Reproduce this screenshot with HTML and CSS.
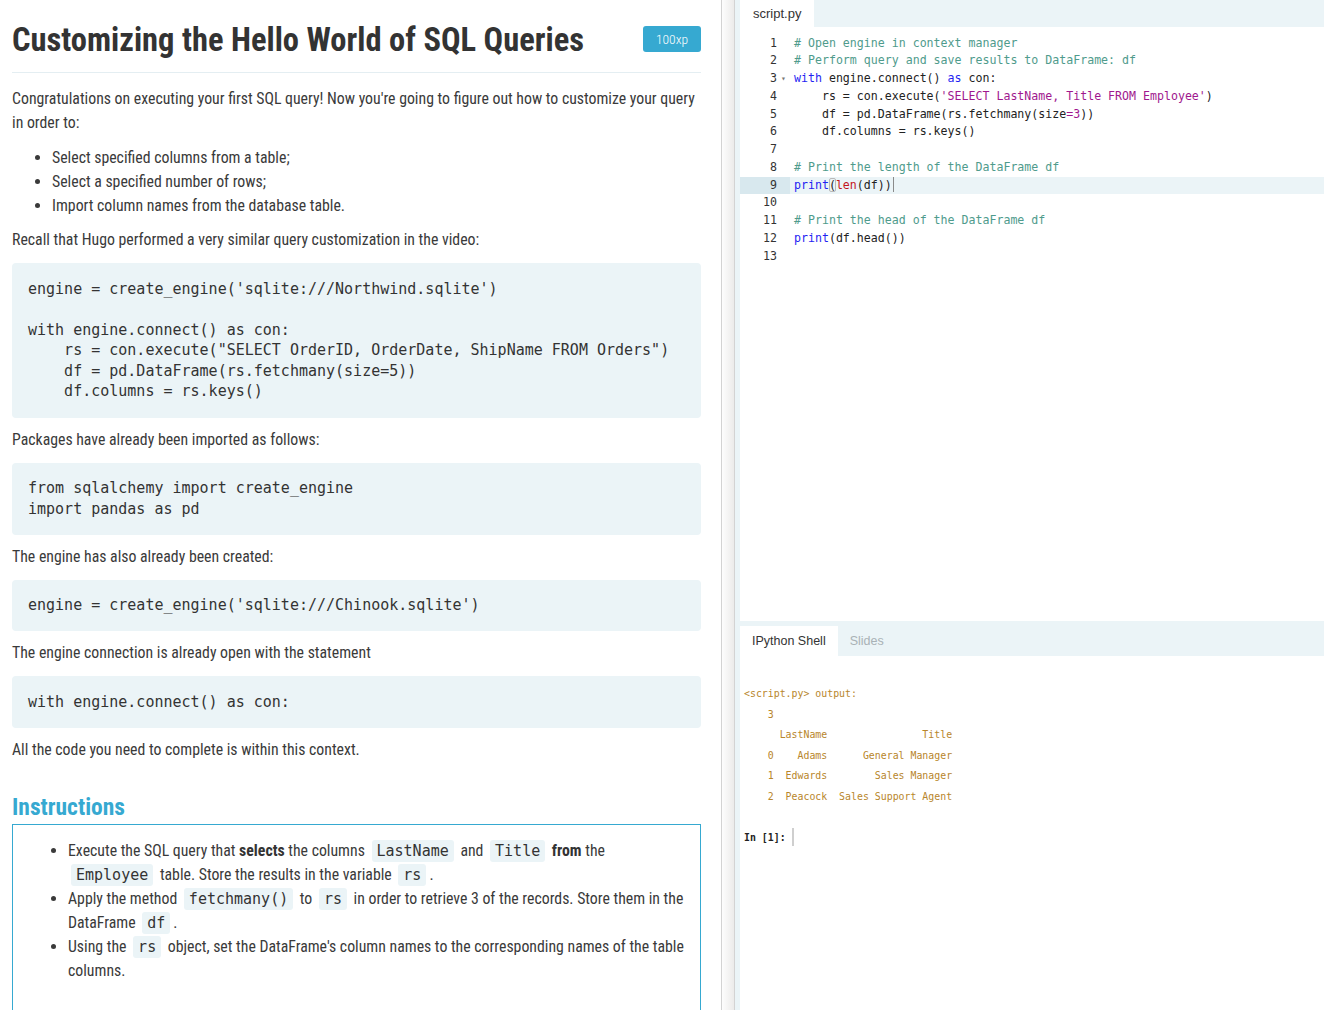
FILE: index.html
```html
<!DOCTYPE html>
<html lang="en">
<head>
<meta charset="utf-8">
<title>Customizing the Hello World of SQL Queries</title>
<link rel="stylesheet" href="styles.css">
</head>
<body>
<div class="app">
  <section class="lesson">
    <header class="lesson-head">
      <h1>Customizing the Hello World of SQL Queries</h1>
      <span class="xp">100xp</span>
    </header>
    <p>Congratulations on executing your first SQL query! Now you're going to figure out how to customize your query in order to:</p>
    <ul class="list">
      <li>Select specified columns from a table;</li>
      <li>Select a specified number of rows;</li>
      <li>Import column names from the database table.</li>
    </ul>
    <p>Recall that Hugo performed a very similar query customization in the video:</p>
    <pre class="code">engine = create_engine('sqlite:///Northwind.sqlite')

with engine.connect() as con:
    rs = con.execute("SELECT OrderID, OrderDate, ShipName FROM Orders")
    df = pd.DataFrame(rs.fetchmany(size=5))
    df.columns = rs.keys()</pre>
    <p>Packages have already been imported as follows:</p>
    <pre class="code">from sqlalchemy import create_engine
import pandas as pd</pre>
    <p>The engine has also already been created:</p>
    <pre class="code">engine = create_engine('sqlite:///Chinook.sqlite')</pre>
    <p>The engine connection is already open with the statement</p>
    <pre class="code">with engine.connect() as con:</pre>
    <p>All the code you need to complete is within this context.</p>
    <h2 class="instr-title">Instructions</h2>
    <div class="instr-box">
      <ul class="instr-list">
        <li>Execute the SQL query that <strong>selects</strong> the columns <code class="ic">LastName</code> and <code class="ic">Title</code> <strong>from</strong> the <code class="ic">Employee</code> table. Store the results in the variable <code class="ic">rs</code>.</li>
        <li>Apply the method <code class="ic">fetchmany()</code> to <code class="ic">rs</code> in order to retrieve 3 of the records. Store them in the DataFrame <code class="ic">df</code>.</li>
        <li>Using the <code class="ic">rs</code> object, set the DataFrame's column names to the corresponding names of the table columns.</li>
      </ul>
    </div>
  </section>

  <div class="splitter"></div>

  <section class="workspace">
    <div class="editor-pane">
      <div class="tabbar">
        <span class="tab active">script.py</span>
      </div>
      <div class="editor">
        <div class="line"><span class="gutter"><span class="ln">1</span><span class="fold"></span></span><span class="src"><span class="c"># Open engine in context manager</span></span></div>
        <div class="line"><span class="gutter"><span class="ln">2</span><span class="fold"></span></span><span class="src"><span class="c"># Perform query and save results to DataFrame: df</span></span></div>
        <div class="line"><span class="gutter"><span class="ln">3</span><span class="fold">&#9662;</span></span><span class="src"><span class="k">with</span> engine.connect() <span class="k">as</span> con:</span></div>
        <div class="line"><span class="gutter"><span class="ln">4</span><span class="fold"></span></span><span class="src">    rs = con.execute(<span class="s">'SELECT LastName, Title FROM Employee'</span>)</span></div>
        <div class="line"><span class="gutter"><span class="ln">5</span><span class="fold"></span></span><span class="src">    df = pd.DataFrame(rs.fetchmany(size<span class="o">=</span><span class="n">3</span>))</span></div>
        <div class="line"><span class="gutter"><span class="ln">6</span><span class="fold"></span></span><span class="src">    df.columns = rs.keys()</span></div>
        <div class="line"><span class="gutter"><span class="ln">7</span><span class="fold"></span></span><span class="src"></span></div>
        <div class="line"><span class="gutter"><span class="ln">8</span><span class="fold"></span></span><span class="src"><span class="c"># Print the length of the DataFrame df</span></span></div>
        <div class="line active"><span class="gutter"><span class="ln">9</span><span class="fold"></span></span><span class="src"><span class="k">print</span><span class="bm">(</span><span class="b">len</span>(df))<span class="cursor"></span></span></div>
        <div class="line"><span class="gutter"><span class="ln">10</span><span class="fold"></span></span><span class="src"></span></div>
        <div class="line"><span class="gutter"><span class="ln">11</span><span class="fold"></span></span><span class="src"><span class="c"># Print the head of the DataFrame df</span></span></div>
        <div class="line"><span class="gutter"><span class="ln">12</span><span class="fold"></span></span><span class="src"><span class="k">print</span>(df.head())</span></div>
        <div class="line"><span class="gutter"><span class="ln">13</span><span class="fold"></span></span><span class="src"></span></div>
      </div>
    </div>
    <div class="shell-pane">
      <div class="tabbar shell-tabs">
        <span class="tab active">IPython Shell</span>
        <span class="tab muted">Slides</span>
      </div>
      <pre class="console"><span class="out">&lt;script.py&gt; output:
    3
      LastName                Title
    0    Adams      General Manager
    1  Edwards        Sales Manager
    2  Peacock  Sales Support Agent</span>

<span class="prompt">In [1]: </span><span class="shell-cursor"></span></pre>
    </div>
  </section>
</div>
</body>
</html>
```

FILE: styles.css
```css
* {
  box-sizing: border-box;
}

html,
body {
  margin: 0;
  padding: 0;
}

body {
  width: 1324px;
  height: 1010px;
  overflow: hidden;
  background: #ffffff;
  font-family: Roboto, "Liberation Sans", sans-serif;
  color: #3a3a3a;
}

.app {
  display: flex;
  height: 1010px;
}

/* ---------- Lesson (left) ---------- */

.lesson {
  width: 721px;
  flex: none;
  height: 1010px;
  overflow: hidden;
  padding: 0 20px 0 12px;
  font-size: 15.8px;
  font-stretch: 75%;
  line-height: 24px;
}

.lesson-head {
  display: flex;
  align-items: center;
  justify-content: space-between;
  height: 73px;
  padding-top: 8px;
  border-bottom: 1px solid #e4eef2;
  margin-bottom: 14px;
}

.lesson-head h1 {
  margin: 0;
  font-size: 32.5px;
  line-height: 40px;
  font-weight: 700;
  color: #333333;
}

.xp {
  display: flex;
  align-items: center;
  justify-content: center;
  width: 58px;
  height: 26px;
  margin-top: -2px;
  border-radius: 3px;
  background: #36a9d1;
  color: #ffffff;
  font-size: 13.5px;
  font-weight: 300;
}

.lesson p {
  margin: 0 0 11px;
}

.list {
  margin: 0 0 10px;
  padding-left: 40px;
}

.code {
  margin: 0 0 10px;
  padding: 15.5px 16px;
  background: #ebf4f7;
  border-radius: 4px;
  font-family: "DejaVu Sans Mono", monospace;
  font-size: 15px;
  line-height: 20.6px;
  color: #333333;
}

.instr-title {
  margin: 31px 0 3px;
  font-size: 23.5px;
  line-height: 28px;
  font-weight: 700;
  color: #36a9d1;
}

.instr-box {
  border: 1px solid #36a9d1;
  padding: 14px 15px 60px 0;
}

.instr-list {
  margin: 0;
  padding-left: 55px;
}

.instr-list strong {
  color: #333333;
}

.ic {
  font-family: "DejaVu Sans Mono", monospace;
  font-size: 15px;
  background: #ebf4f7;
  color: #333333;
  padding: 2px 5px;
  margin: 0 3px;
  border-radius: 3px;
}

/* ---------- Splitter ---------- */

.splitter {
  width: 14px;
  flex: none;
  border-left: 1px solid #d3d3d3;
  border-right: 1px solid #d3d3d3;
  background: linear-gradient(to right, #fdfdfd, #ecebea);
}

/* ---------- Workspace (right) ---------- */

.workspace {
  flex: 1;
  display: flex;
  flex-direction: column;
  border-left: 5px solid #ebf4f7;
  min-width: 0;
}

.tabbar {
  display: flex;
  height: 27px;
  background: #ebf4f7;
}

.tab {
  padding: 0 13px;
  font-family: "Liberation Sans", sans-serif;
  font-size: 13px;
  line-height: 27px;
  color: #333333;
}

.tab.active {
  background: #ffffff;
}

.tab.muted {
  color: #a9b2b6;
}

.editor-pane {
  height: 621px;
  flex: none;
}

.editor {
  padding-top: 7.5px;
  font-family: "DejaVu Sans Mono", monospace;
  font-size: 11.6px;
  line-height: 17.75px;
  color: #222222;
}

.line {
  display: flex;
  height: 17.75px;
}

.gutter {
  display: flex;
  width: 50px;
  flex: none;
}

.ln {
  width: 37px;
  text-align: right;
  color: #333333;
}

.fold {
  width: 13px;
  text-align: center;
  font-size: 8px;
  color: #777777;
}

.src {
  flex: 1;
  padding-left: 4px;
  white-space: pre;
}

.line.active .gutter {
  background: #d8e8ee;
}

.line.active .src {
  background: #ebf4f7;
}

.c {
  color: #4f9b8c;
}

.k {
  color: #1f1ff2;
}

.s,
.n,
.o {
  color: #a0178e;
}

.b {
  color: #c4161c;
}

.bm {
  outline: 1px solid #b9b9b9;
  outline-offset: -1px;
  border-radius: 2px;
}

.cursor {
  display: inline-block;
  width: 1px;
  height: 15px;
  margin-left: 1px;
  vertical-align: -3px;
  background: #8a8a8a;
}

.shell-pane {
  flex: 1;
  display: flex;
  flex-direction: column;
}

.shell-tabs {
  height: 35px;
  padding-top: 5px;
}

.shell-tabs .tab {
  line-height: 30px;
  font-size: 12.5px;
  padding: 0 12px;
}

.console {
  margin: 0;
  padding: 28px 0 0 4px;
  font-family: "DejaVu Sans Mono", monospace;
  font-size: 9.9px;
  line-height: 20.6px;
  color: #222222;
}

.out {
  color: #b8862b;
}

.prompt {
  color: #222222;
  font-weight: 600;
}

.shell-cursor {
  display: inline-block;
  width: 2px;
  height: 18px;
  vertical-align: -5px;
  background: #cfcfcf;
}
```
